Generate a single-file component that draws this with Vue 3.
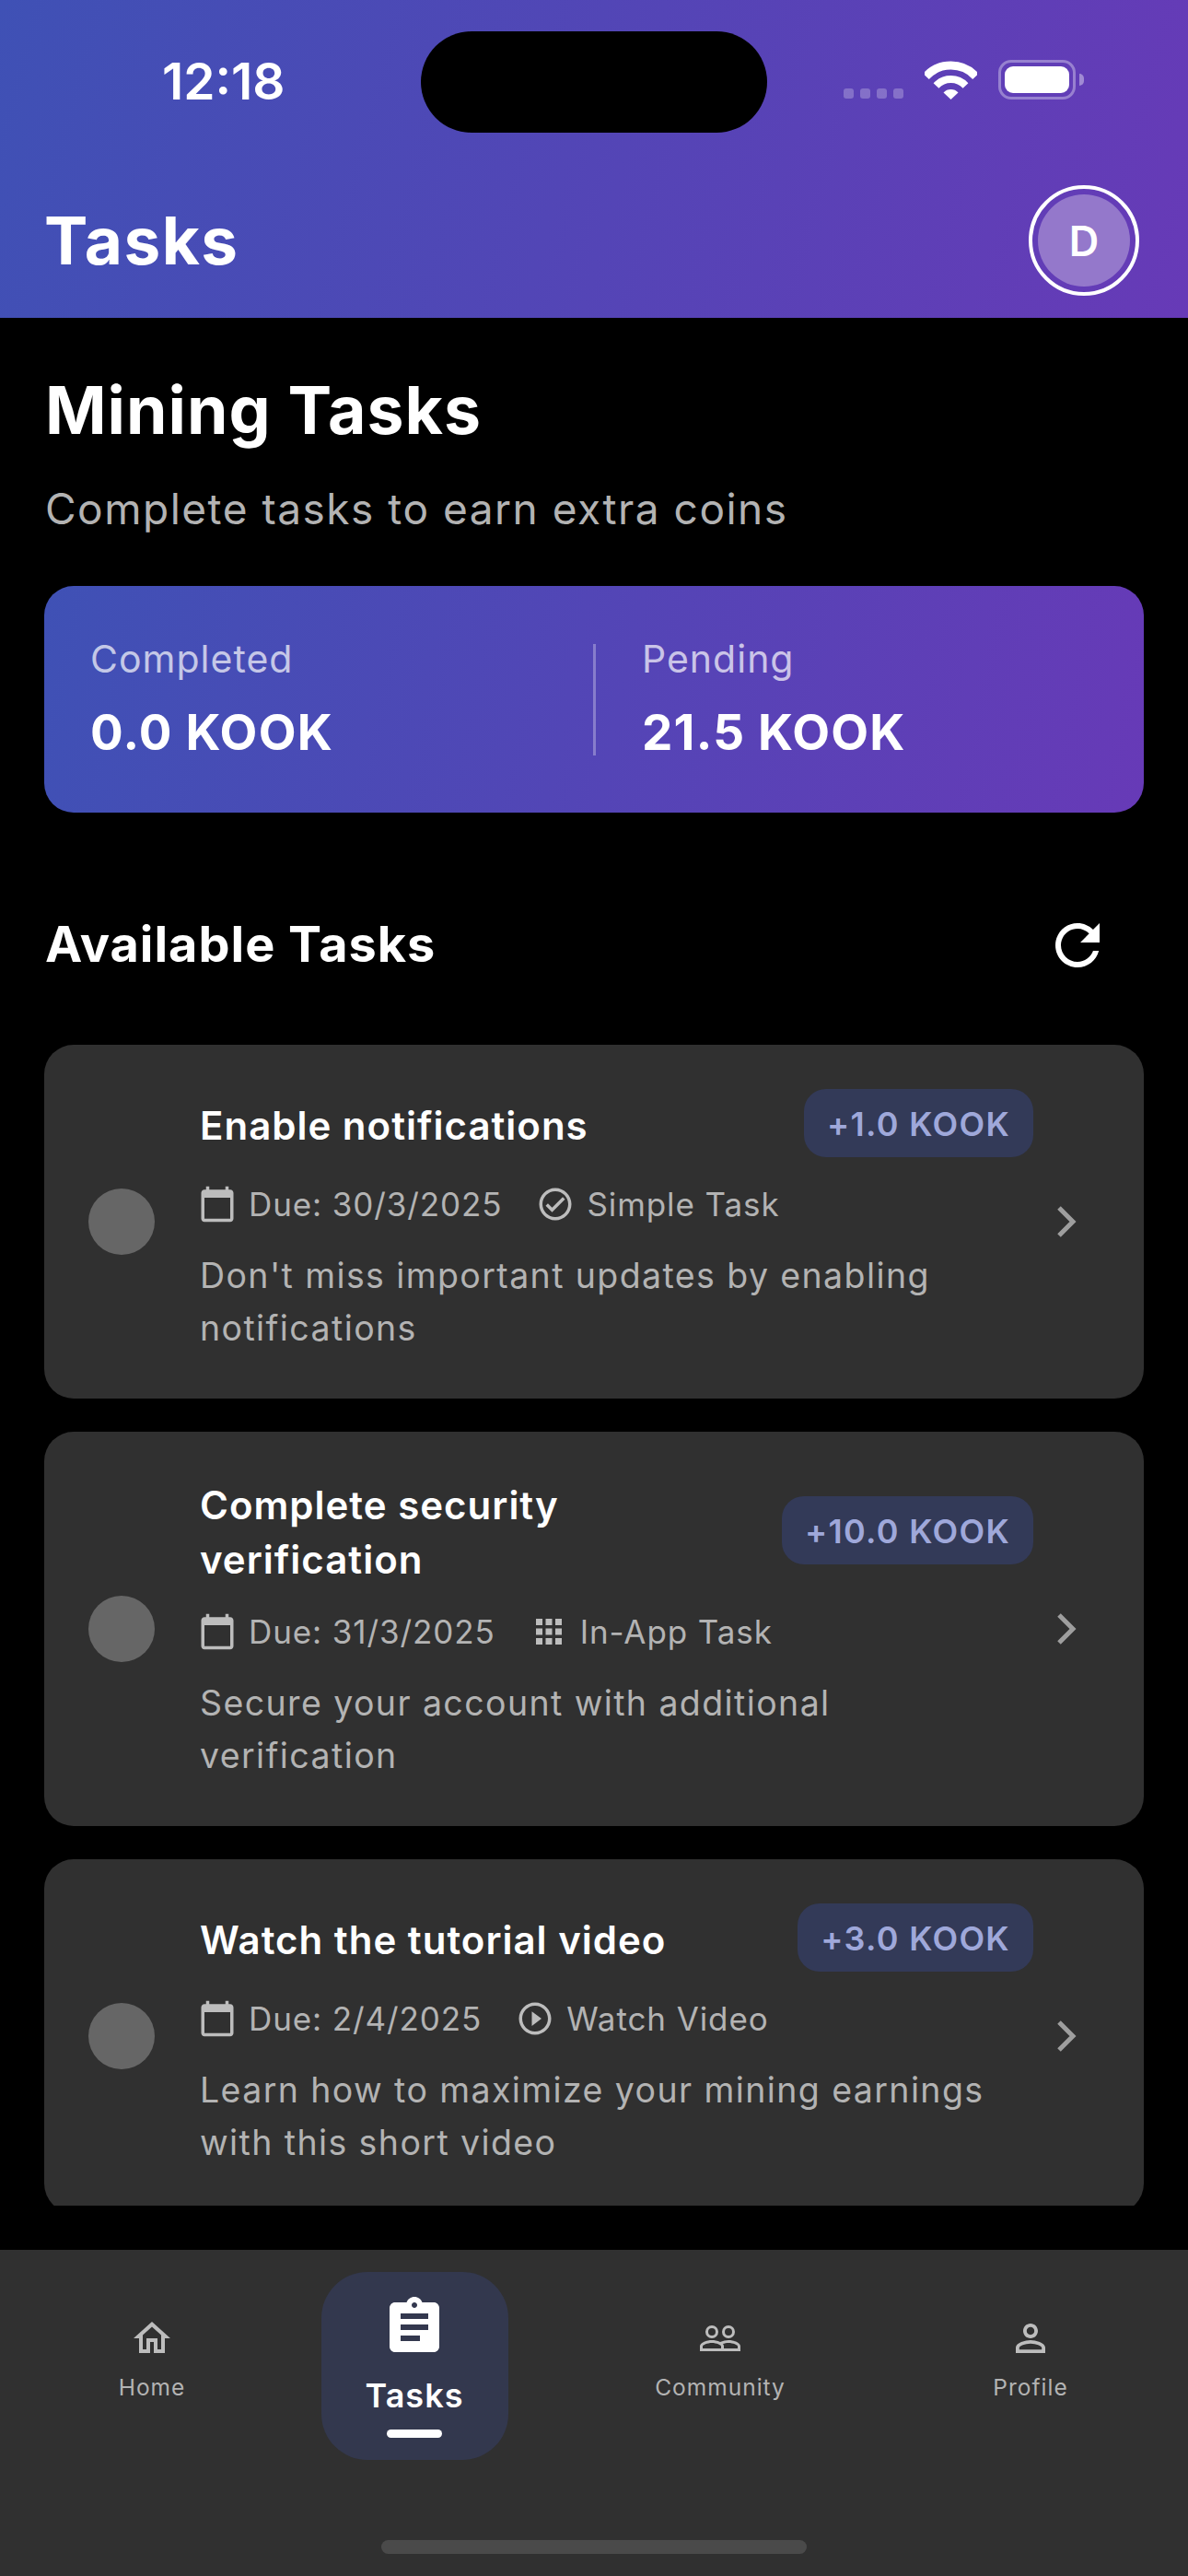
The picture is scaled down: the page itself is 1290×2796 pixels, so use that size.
<template>
  <div class="screen">
    <header class="top">
      <div class="status">
        <span class="time">12:18</span>
        <div class="island"></div>
        <div class="status-right">
          <div class="signal">
            <i v-for="n in 4" :key="n"></i>
          </div>
          <svg class="wifi" width="57" height="42" viewBox="0 0 57 42">
            <path d="M1.5 16.8A37 37 0 0 1 55.5 16.8" fill="none" stroke="#fff" stroke-width="9" />
            <path d="M12.5 27A22 22 0 0 1 44.5 27" fill="none" stroke="#fff" stroke-width="8" />
            <path d="M28.5 42L20.5 34.5A11 11 0 0 1 36.5 34.5Z" fill="#fff" />
          </svg>
          <div class="battery">
            <div class="battery-fill"></div>
            <div class="battery-nub"></div>
          </div>
        </div>
      </div>
      <div class="appbar">
        <span class="appbar-title">Tasks</span>
        <div class="avatar"><span>D</span></div>
      </div>
    </header>

    <main class="body">
      <h1 class="page-title">Mining Tasks</h1>
      <p class="page-sub">Complete tasks to earn extra coins</p>

      <section class="summary">
        <div class="summary-col">
          <div class="summary-label">Completed</div>
          <div class="summary-value">0.0 KOOK</div>
        </div>
        <div class="summary-divider"></div>
        <div class="summary-col">
          <div class="summary-label">Pending</div>
          <div class="summary-value">21.5 KOOK</div>
        </div>
      </section>

      <div class="section-head">
        <h2>Available Tasks</h2>
        <svg class="refresh" width="72" height="72" viewBox="0 0 24 24" fill="#fff"><path :d="icons.refresh" /></svg>
      </div>

      <div class="task-list">
        <article v-for="task in tasks" :key="task.title" class="task">
          <div class="task-dot"></div>
          <div class="task-main">
            <div class="task-top">
              <h3>{{ task.title }}</h3>
              <span class="reward">{{ task.reward }}</span>
            </div>
            <div class="task-meta">
              <svg width="42" height="42" viewBox="0 0 24 24" fill="#bdbdbd"><path :d="icons.calendar" /></svg>
              <span class="due">Due: {{ task.due }}</span>
              <svg width="42" height="42" viewBox="0 0 24 24" fill="#bdbdbd"><path :d="icons[task.icon]" /></svg>
              <span>{{ task.kind }}</span>
            </div>
            <p class="task-desc">{{ task.desc }}</p>
          </div>
          <div class="task-arrow">
            <svg width="24" height="36" viewBox="0 0 24 36" fill="none" stroke="#9e9e9e" stroke-width="5"><path d="M4 3l15 15L4 33" /></svg>
          </div>
        </article>
      </div>
    </main>

    <nav class="tabbar">
      <div v-for="item in navItems" :key="item.label" :class="['tab', { active: item.active }]">
        <svg :width="item.active ? 72 : 48" :height="item.active ? 72 : 48" viewBox="0 0 24 24" :fill="item.active ? '#fff' : '#bdbdbd'">
          <path :d="icons[item.icon]" />
          <template v-if="item.icon === 'people'">
            <circle cx="7.5" cy="8.5" r="2.75" fill="none" stroke="#bdbdbd" stroke-width="1.5" />
            <circle cx="16.5" cy="8.5" r="2.75" fill="none" stroke="#bdbdbd" stroke-width="1.5" />
          </template>
        </svg>
        <span class="tab-label">{{ item.label }}</span>
        <i v-if="item.active" class="tab-mark"></i>
      </div>
      <div class="home-bar"></div>
    </nav>
  </div>
</template>

<script setup>
const icons = {
  refresh: 'M17.65 6.35C16.2 4.9 14.21 4 12 4c-4.42 0-7.99 3.58-7.99 8s3.57 8 7.99 8c3.73 0 6.84-2.55 7.73-6h-2.08c-.82 2.33-3.04 4-5.65 4-3.31 0-6-2.69-6-6s2.69-6 6-6c1.66 0 3.14.69 4.22 1.78L13 11h7V4l-2.35 2.35z',
  calendar: 'M20 3h-1V1h-2v2H7V1H5v2H4c-1.1 0-2 .9-2 2v16c0 1.1.9 2 2 2h16c1.1 0 2-.9 2-2V5c0-1.1-.9-2-2-2zm0 18H4V8h16v13z',
  check: 'M12 2C6.48 2 2 6.48 2 12s4.48 10 10 10 10-4.48 10-10S17.52 2 12 2zm0 18c-4.41 0-8-3.59-8-8s3.59-8 8-8 8 3.59 8 8-3.59 8-8 8zm4.59-12.42L10 14.17l-2.59-2.58L6 13l4 4 8-8z',
  apps: 'M4 8h4V4H4v4zm6 12h4v-4h-4v4zm-6 0h4v-4H4v4zm0-6h4v-4H4v4zm6 0h4v-4h-4v4zm6-10v4h4V4h-4zm-6 4h4V4h-4v4zm6 6h4v-4h-4v4zm0 6h4v-4h-4v4z',
  play: 'M10 16.5l6-4.5-6-4.5v9zM12 2C6.48 2 2 6.48 2 12s4.48 10 10 10 10-4.48 10-10S17.52 2 12 2zm0 18c-4.41 0-8-3.59-8-8s3.59-8 8-8 8 3.59 8 8-3.59 8-8 8z',
  home: 'M12 5.69l5 4.5V18h-2v-6H9v6H7v-7.81l5-4.5M12 3L2 12h3v8h6v-6h2v6h6v-8h3L12 3z',
  assignment: 'M19 3h-4.18C14.4 1.84 13.3 1 12 1c-1.3 0-2.4.84-2.82 2H5c-1.1 0-2 .9-2 2v14c0 1.1.9 2 2 2h14c1.1 0 2-.9 2-2V5c0-1.1-.9-2-2-2zm-7 0c.55 0 1 .45 1 1s-.45 1-1 1-1-.45-1-1 .45-1 1-1zm2 14H7v-2h7v2zm3-4H7v-2h10v2zm0-4H7V7h10v2z',
  people: 'M16.5 13c-1.2 0-3.07.34-4.5 1-1.43-.67-3.3-1-4.5-1C5.33 13 1 14.08 1 16.25V19h22v-2.75c0-2.17-4.33-3.25-6.5-3.25zm-4 4.5h-10v-1.25c0-.54 2.56-1.75 5-1.75s5 1.21 5 1.75v1.25zm9 0H14v-1.25c0-.46-.2-.86-.52-1.22.88-.3 1.96-.53 3.02-.53 2.44 0 5 1.21 5 1.75v1.25z',
  person: 'M12 5.9c1.16 0 2.1.94 2.1 2.1s-.94 2.1-2.1 2.1S9.9 9.16 9.9 8s.94-2.1 2.1-2.1m0 9c2.97 0 6.1 1.46 6.1 2.1v1.1H5.9V17c0-.64 3.13-2.1 6.1-2.1M12 4C9.79 4 8 5.79 8 8s1.79 4 4 4 4-1.79 4-4-1.79-4-4-4zm0 9c-2.67 0-8 1.34-8 4v3h16v-3c0-2.66-5.33-4-8-4z'
}

const tasks = [
  {
    title: 'Enable notifications',
    reward: '+1.0 KOOK',
    due: '30/3/2025',
    icon: 'check',
    kind: 'Simple Task',
    desc: "Don't miss important updates by enabling notifications"
  },
  {
    title: 'Complete security verification',
    reward: '+10.0 KOOK',
    due: '31/3/2025',
    icon: 'apps',
    kind: 'In-App Task',
    desc: 'Secure your account with additional verification'
  },
  {
    title: 'Watch the tutorial video',
    reward: '+3.0 KOOK',
    due: '2/4/2025',
    icon: 'play',
    kind: 'Watch Video',
    desc: 'Learn how to maximize your mining earnings with this short video'
  }
]

const navItems = [
  { label: 'Home', icon: 'home' },
  { label: 'Tasks', icon: 'assignment', active: true },
  { label: 'Community', icon: 'people' },
  { label: 'Profile', icon: 'person' }
]
</script>

<style>
html, body {
  margin: 0;
  background: #000;
}
</style>

<style scoped>
.screen {
  width: 1290px;
  height: 2796px;
  display: flex;
  flex-direction: column;
  overflow: hidden;
  background: #000;
  color: #fff;
  font-family: Inter, "Liberation Sans", sans-serif;
}

/* header */
.top {
  height: 345px;
  flex: none;
  box-sizing: border-box;
  background: linear-gradient(105deg, #3f51b5, #673ab7);
}

.status {
  height: 201px;
  position: relative;
}

.time {
  position: absolute;
  left: 176px;
  top: 56px;
  font-size: 55px;
  line-height: 64px;
  font-weight: 600;
}

.island {
  position: absolute;
  left: 457px;
  top: 34px;
  width: 376px;
  height: 110px;
  border-radius: 55px;
  background: #000;
}

.status-right {
  position: absolute;
  left: 916px;
  top: 65px;
  display: flex;
  align-items: flex-end;
}

.signal {
  display: flex;
  gap: 7px;
  margin-right: 23px;
  margin-bottom: 1px;
}

.signal i {
  width: 11px;
  height: 11px;
  border-radius: 3px;
  background: rgba(255, 255, 255, 0.25);
}

.battery {
  width: 84px;
  height: 43px;
  box-sizing: border-box;
  margin-left: 23px;
  padding: 4px;
  border: 3px solid rgba(255, 255, 255, 0.35);
  border-radius: 14px;
  position: relative;
}

.battery-fill {
  height: 100%;
  border-radius: 9px;
  background: #fff;
}

.battery-nub {
  position: absolute;
  left: 85px;
  top: 12px;
  width: 5px;
  height: 13px;
  border-radius: 0 5px 5px 0;
  background: rgba(255, 255, 255, 0.4);
}

.appbar {
  display: flex;
  align-items: center;
  justify-content: space-between;
  padding: 0 53px 0 48px;
}

.appbar-title {
  font-size: 71px;
  line-height: 120px;
  font-weight: 700;
  letter-spacing: 1.5px;
}

.avatar {
  width: 120px;
  height: 120px;
  box-sizing: border-box;
  padding: 6px;
  border: 4px solid #fff;
  border-radius: 50%;
}

.avatar span {
  display: flex;
  height: 100%;
  align-items: center;
  justify-content: center;
  border-radius: 50%;
  background: #9478cb;
  font-size: 45px;
  font-weight: 600;
}

/* body */
.body {
  flex: 1;
  min-height: 0;
  margin-bottom: 48px;
  padding: 60px 48px 0;
  overflow: hidden;
}

.page-title {
  margin: 0 0 0 1px;
  font-size: 71.5px;
  line-height: 80px;
  font-weight: 700;
  letter-spacing: 1px;
}

.page-sub {
  margin: 39px 0 56px 1px;
  font-size: 46px;
  line-height: 56px;
  letter-spacing: 1.5px;
  color: #b3b3b3;
}

.summary {
  height: 246px;
  box-sizing: border-box;
  padding: 54px 50px 0;
  display: flex;
  border-radius: 32px;
  background: linear-gradient(101.6deg, #3f51b5, #673ab7);
}

.summary-col {
  flex: none;
  width: 546px;
}

.summary-col + .summary-divider + .summary-col {
  flex: 1;
  width: auto;
  margin-left: 50px;
}

.summary-label {
  font-size: 41px;
  line-height: 50px;
  letter-spacing: 1px;
  color: rgba(255, 255, 255, 0.7);
}

.summary-value {
  margin-top: 23px;
  font-size: 53px;
  line-height: 64px;
  font-weight: 700;
  letter-spacing: 1.2px;
}

.summary-divider {
  flex: none;
  width: 3px;
  height: 121px;
  margin-top: 9px;
  background: rgba(255, 255, 255, 0.3);
}

.section-head {
  margin: 106px 36px 74px 1px;
  height: 72px;
  display: flex;
  align-items: center;
  justify-content: space-between;
}

.section-head svg {
  margin-top: 4px;
}

.section-head h2 {
  margin: 0;
  font-size: 54px;
  font-weight: 700;
  letter-spacing: 1px;
}

.task-list {
  display: flex;
  flex-direction: column;
  gap: 36px;
}

.task {
  flex: none;
  display: flex;
  align-items: center;
  padding: 48px;
  border-radius: 32px;
  background: #303030;
}

.task-dot {
  flex: none;
  width: 72px;
  height: 72px;
  margin-right: 49px;
  border-radius: 50%;
  background: #666;
}

.task-main {
  flex: 1;
  min-width: 0;
}

.task-top {
  display: flex;
  align-items: center;
  justify-content: space-between;
  gap: 32px;
}

.task-top h3 {
  margin: 0 0 -2px;
  padding-top: 2px;
  font-size: 42px;
  line-height: 59px;
  font-weight: 600;
  letter-spacing: 1px;
}

.reward {
  flex: none;
  height: 74px;
  box-sizing: border-box;
  padding: 2px 25px 0;
  display: flex;
  align-items: center;
  border-radius: 24px;
  background: #333a58;
  color: #9fa8da;
  font-size: 36px;
  font-weight: 600;
  letter-spacing: 1.3px;
}

.task-meta {
  margin: 28px 0 26px -2px;
  height: 46px;
  display: flex;
  align-items: center;
  color: #b3b3b3;
  font-size: 35px;
  letter-spacing: 0.9px;
}

.task-meta svg {
  flex: none;
  margin-right: 13px;
}

.due {
  margin-right: 37px;
}

.task-desc {
  margin: 0;
  padding-right: 16px;
  font-size: 37.5px;
  line-height: 57px;
  letter-spacing: 1.4px;
  color: #b3b3b3;
}

.task-arrow {
  flex: none;
  width: 72px;
  display: flex;
  justify-content: center;
}

/* bottom nav */
.tabbar {
  flex: none;
  height: 354px;
  box-sizing: border-box;
  padding-top: 24px;
  display: grid;
  grid-template-columns: 330px 240px 424px 250px;
  align-items: start;
  justify-items: center;
  position: relative;
  background: #303030;
}

.tab {
  display: flex;
  flex-direction: column;
  align-items: center;
  padding-top: 48px;
  color: #b3b3b3;
}

.tab-label {
  margin-top: 14px;
  font-size: 24.5px;
  line-height: 30px;
  letter-spacing: 1px;
}

.tab.active {
  width: 203px;
  height: 204px;
  box-sizing: border-box;
  padding-top: 24px;
  border-radius: 50px;
  background: #33384e;
  color: #fff;
}

.tab.active .tab-label {
  margin-top: 16px;
  font-size: 36px;
  line-height: 44px;
  font-weight: 600;
  letter-spacing: 1px;
}

.tab-mark {
  width: 60px;
  height: 9px;
  margin-top: 15px;
  border-radius: 5px;
  background: #fff;
}

.home-bar {
  position: absolute;
  left: 414px;
  bottom: 24px;
  width: 462px;
  height: 15px;
  border-radius: 8px;
  background: #4a4a4a;
}
</style>
